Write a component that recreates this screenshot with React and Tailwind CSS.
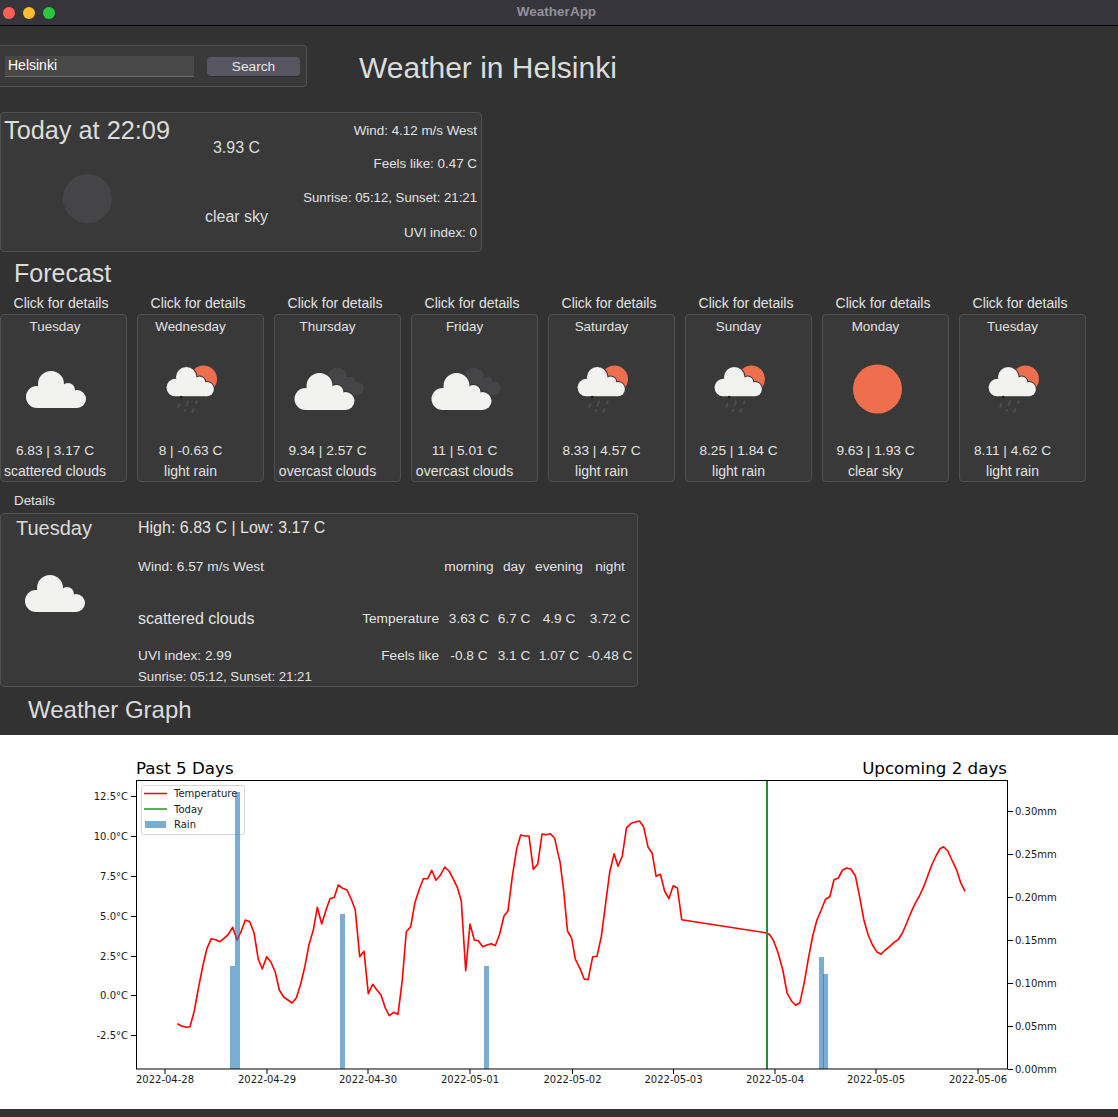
// WeatherApp window: current weather, forecast cards, details and graph
const forecast = [
  { day: 'Tuesday', temp: '6.83 | 3.17 C', desc: 'scattered clouds', icon: 'clouds' },
  { day: 'Wednesday', temp: '8 | -0.63 C', desc: 'light rain', icon: 'rain' },
  { day: 'Thursday', temp: '9.34 | 2.57 C', desc: 'overcast clouds', icon: 'overcast' },
  { day: 'Friday', temp: '11 | 5.01 C', desc: 'overcast clouds', icon: 'overcast' },
  { day: 'Saturday', temp: '8.33 | 4.57 C', desc: 'light rain', icon: 'rain' },
  { day: 'Sunday', temp: '8.25 | 1.84 C', desc: 'light rain', icon: 'rain' },
  { day: 'Monday', temp: '9.63 | 1.93 C', desc: 'clear sky', icon: 'sun' },
  { day: 'Tuesday', temp: '8.11 | 4.62 C', desc: 'light rain', icon: 'rain' },
]

// traced from the plot, first part and second part
const pastLine = [
  [232, 821], [245, 828], [258, 832], [270, 830], [283, 783], [296, 710], [309, 645], [321, 595], [334, 566], [347, 569],
  [360, 575], [372, 565], [385, 553], [398, 532], [411, 570], [423, 545], [436, 510], [449, 515], [462, 548], [475, 628],
  [487, 657], [500, 620], [513, 637], [526, 667], [538, 720], [551, 741], [564, 750], [576, 759], [589, 744], [602, 702],
  [615, 647], [627, 584], [640, 540], [652, 472], [665, 522], [678, 480], [690, 446], [703, 442], [715, 405], [728, 415],
  [741, 420], [754, 448], [766, 480], [779, 620], [792, 604], [805, 731], [818, 703], [830, 719], [843, 735], [856, 774],
  [868, 797], [881, 787], [894, 793], [907, 690], [919, 545], [932, 530], [945, 457], [958, 418], [970, 386], [983, 386],
  [995, 361], [1008, 391], [1021, 376], [1034, 351], [1047, 363], [1059, 385], [1072, 412], [1084, 453], [1097, 662], [1110, 522],
  [1123, 570], [1135, 572], [1148, 590], [1161, 585], [1174, 581], [1186, 587], [1199, 552], [1212, 498], [1224, 482], [1237, 380],
  [1250, 296], [1262, 255], [1275, 258], [1287, 258], [1300, 358], [1313, 343], [1326, 252], [1338, 254], [1351, 251], [1364, 265],
  [1376, 320],
].map(([x, y]) => [100 + x / 3, 750 + y / 3])

const laterLine = [
  [0, 335], [10, 420], [21, 543], [33, 565], [43, 627], [56, 655], [68, 687], [79, 689], [92, 620], [104, 619],
  [116, 560], [127, 470], [140, 365], [152, 311], [163, 349], [175, 318], [187, 233], [200, 220], [212, 216], [223, 213],
  [235, 230], [247, 290], [259, 310], [270, 379], [282, 373], [294, 423], [306, 446], [318, 407], [330, 414], [342, 509],
  [581, 549], [590, 555], [600, 572], [612, 606], [626, 660], [638, 728], [650, 752], [662, 766], [674, 758], [686, 700],
  [698, 625], [710, 558], [722, 510], [734, 480], [746, 448], [758, 440], [770, 389], [782, 384], [794, 360], [806, 354],
  [818, 358], [830, 378], [842, 440], [854, 510], [866, 555], [878, 585], [890, 605], [902, 613], [914, 600], [926, 590],
  [938, 578], [950, 569], [962, 550], [974, 520], [986, 488], [998, 460], [1010, 438], [1022, 410], [1034, 375], [1046, 342],
  [1058, 315], [1068, 296], [1078, 290], [1090, 303], [1102, 332], [1114, 358], [1126, 398], [1138, 424],
].map(([x, y]) => [560 + x / 2.81, 750 + y / 3])

const tempPoints = [...pastLine, ...laterLine].map(([x, y]) => `${x.toFixed(1)},${y.toFixed(1)}`).join(' ')

const leftTicks = [['12.5°C', 796], ['10.0°C', 836], ['7.5°C', 876], ['5.0°C', 916], ['2.5°C', 956], ['0.0°C', 995], ['-2.5°C', 1035]]
const rightTicks = [['0.30mm', 811], ['0.25mm', 854], ['0.20mm', 897], ['0.15mm', 940], ['0.10mm', 983], ['0.05mm', 1026], ['0.00mm', 1069]]
const dateTicks = [['2022-04-28', 165], ['2022-04-29', 267], ['2022-04-30', 368], ['2022-05-01', 470], ['2022-05-02', 572.5], ['2022-05-03', 673.5], ['2022-05-04', 775], ['2022-05-05', 876], ['2022-05-06', 978]]
const rainBars = [[230, 966, 5], [235, 792, 5], [340, 914, 5], [484, 966, 5], [819, 957, 5], [823, 974, 5]]

function CloudShape({ x, y, scale = 1, fill = '#f2f2f0', outline }) {
  const parts = (
    <>
      <circle cx="25" cy="13" r="13" />
      <circle cx="42" cy="19" r="7" />
      <circle cx="51" cy="28" r="9" />
      <circle cx="11" cy="26" r="11" />
      <rect x="11" y="20" width="40" height="17" />
    </>
  )
  return (
    <g transform={`translate(${x} ${y}) scale(${scale})`}>
      {outline && <g fill={outline} stroke={outline} strokeWidth="2.5">{parts}</g>}
      <g fill={fill}>{parts}</g>
    </g>
  )
}

function WeatherIcon({ type }) {
  return (
    <svg width="80" height="80" viewBox="0 0 80 80" className="block -mt-[3px]">
      {type === 'clouds' && <CloudShape x={11} y={22} />}
      {type === 'sun' && <circle cx="41.5" cy="40" r="24.5" fill="#ef6e4d" />}
      {type === 'overcast' && (
        <>
          <CloudShape x={30.5} y={18.5} scale={0.75} fill="#454547" />
          <CloudShape x={6.5} y={24} outline="#393939" />
        </>
      )}
      {type === 'rain' && (
        <>
          <circle cx="52.5" cy="30" r="13.5" fill="#ef6e4d" />
          <CloudShape x={15.5} y={18} scale={0.79} outline="#393939" />
          <circle cx="30.2" cy="48.2" r="1.4" fill="#222222" />
          <g stroke="#4b4b4d" strokeWidth="2.2" strokeLinecap="round">
            <line x1="28.4" y1="55" x2="27.4" y2="58" />
            <line x1="36.9" y1="52.5" x2="35.6" y2="56.5" />
            <line x1="45.6" y1="52.4" x2="44.9" y2="54" />
            <line x1="34.2" y1="61" x2="33.6" y2="62" />
            <line x1="42.4" y1="60.2" x2="41.4" y2="63" />
          </g>
        </>
      )}
    </svg>
  )
}

function WeatherGraph() {
  return (
    <svg width="1118" height="374" viewBox="0 735 1118 374" className="block font-['DejaVu_Sans',sans-serif]">
      <rect x="0" y="735" width="1118" height="374" fill="#ffffff" />
      <text x="136" y="774" className="text-[16.7px]" fill="#000000">Past 5 Days</text>
      <text x="1007" y="774" textAnchor="end" className="text-[16.7px]" fill="#000000">Upcoming 2 days</text>

      <polyline points={tempPoints} fill="none" stroke="#ff0000" strokeWidth="1.6" strokeLinejoin="round" />
      <line x1="767" y1="780" x2="767" y2="1069" stroke="#2c8c2c" strokeWidth="2" />

      {/* Legend sits under the rain bars */}
      <rect x="141.5" y="785.5" width="103" height="49" rx="2" fill="#ffffff" stroke="#d5d5d5" />
      <line x1="144" y1="793.5" x2="167" y2="793.5" stroke="#ff0000" strokeWidth="1.5" />
      <line x1="144" y1="809" x2="167" y2="809" stroke="#2c8c2c" strokeWidth="1.5" />
      <rect x="145" y="821" width="21" height="7" fill="#1f77b4" fillOpacity="0.6" />
      <text x="174" y="797" className="text-[10px]" fill="#1a1a1a">Temperature</text>
      <text x="174" y="812.5" className="text-[10px]" fill="#1a1a1a">Today</text>
      <text x="174" y="828" className="text-[10px]" fill="#1a1a1a">Rain</text>

      {rainBars.map(([x, y, w]) => (
        <rect key={x} x={x} y={y} width={w} height={1069 - y} fill="#1f77b4" fillOpacity="0.6" />
      ))}

      <rect x="136.5" y="780.5" width="871" height="288.5" fill="none" stroke="#000000" />

      {leftTicks.map(([label, y]) => (
        <g key={label}>
          <line x1="131" y1={y + 0.5} x2="136" y2={y + 0.5} stroke="#000000" />
          <text x="128" y={y + 4} textAnchor="end" className="text-[10px]" fill="#1a1a1a">{label}</text>
        </g>
      ))}
      {rightTicks.map(([label, y]) => (
        <g key={label}>
          <line x1="1008" y1={y + 0.5} x2="1013" y2={y + 0.5} stroke="#000000" />
          <text x="1015" y={y + 4} className="text-[10px]" fill="#1a1a1a">{label}</text>
        </g>
      ))}
      {dateTicks.map(([label, x]) => (
        <g key={label}>
          <line x1={x} y1="1069" x2={x} y2="1074" stroke="#000000" />
          <text x={x} y="1083" textAnchor="middle" className="text-[10px]" fill="#1a1a1a">{label}</text>
        </g>
      ))}
    </svg>
  )
}

export default function App() {
  return (
    <div className="w-[1118px] h-[1117px] overflow-hidden bg-[#323232] text-[#e2e2e2] text-[13.4px] font-['Liberation_Sans',Arial,sans-serif]">
      {/* Title bar */}
      <div className="grid grid-cols-[1fr_auto_1fr] items-center h-[26px] bg-[#37353c] border-b border-black">
        <div className="flex items-center gap-2 pl-[3px]">
          <span className="w-3 h-3 rounded-full bg-[#ff5f57]" />
          <span className="w-3 h-3 rounded-full bg-[#febc2e]" />
          <span className="w-3 h-3 rounded-full bg-[#28c840]" />
        </div>
        <span className="mr-[5px] font-bold text-[13.5px] text-[#93919a]">WeatherApp</span>
        <div />
      </div>

      {/* Search */}
      <div className="flex items-center mt-[19px] h-[42px]">
        <div className="flex items-center w-[307px] h-full bg-[#393939] border border-l-0 border-[#505050] rounded-r-sm">
          <div className="flex items-center ml-[5px] pl-[3px] w-[189px] h-[21px] bg-[#484848] border-b border-[#6a6a6a] text-[14px] text-white">Helsinki</div>
          <button className="flex items-center justify-center mt-[2px] pt-px ml-[13px] w-[93px] h-[20px] bg-[#57555f] rounded border-b border-[#2b2b2b] text-[13.7px] text-[#e6e6e6]">Search</button>
        </div>
        <h1 className="ml-[52px] mt-[2px] text-[30px] text-[#dcdcdc]">Weather in Helsinki</h1>
      </div>

      {/* Today */}
      <div className="flex mt-[25px] w-[482px] h-[140px] bg-[#393939] border border-[#505050] rounded-sm">
        <div className="flex flex-col w-[190px]">
          <div className="flex items-center h-[36px] pl-[3px] text-[25.3px] text-[#dcdcdc]">Today at 22:09</div>
          <div className="ml-[62px] mt-[25px] w-[49px] h-[49px] rounded-full bg-[#454547]" />
        </div>
        <div className="grid grid-rows-[70px_68px] w-[91px] text-center text-[16px] text-[#dcdcdc]">
          <div className="self-center">3.93 C</div>
          <div className="self-center">clear sky</div>
        </div>
        <div className="flex-1 grid grid-rows-[34px_33px_34px_36px] items-center justify-items-end pt-px pr-[4px]">
          <div>Wind: 4.12 m/s West</div>
          <div>Feels like: 0.47 C</div>
          <div className="text-[13.2px]">Sunrise: 05:12, Sunset: 21:21</div>
          <div>UVI index: 0</div>
        </div>
      </div>

      {/* Forecast */}
      <h2 className="flex items-center h-[44px] pl-[14px] text-[25px] text-[#dcdcdc]">Forecast</h2>
      <div className="flex gap-[10px]">
        {forecast.map((item, i) => (
          <div key={i} className="w-[127px]">
            <div className="flex items-center justify-center w-[122px] h-[14px] text-[14px]">Click for details</div>
            <div className={`grid grid-rows-[24px_102px_20px_20px] justify-items-center items-center mt-[4px] w-[127px] h-[168px] bg-[#393939] border border-[#505050] rounded-sm ${i === 0 ? 'pr-[17px]' : 'pr-[20px]'}`}>
              <div>{item.day}</div>
              <WeatherIcon type={item.icon} />
              <div className="text-[13.7px]">{item.temp}</div>
              <div className="whitespace-nowrap text-[14px]">{item.desc}</div>
            </div>
          </div>
        ))}
      </div>

      {/* Details */}
      <div className="flex items-center mt-[10px] h-[18px] pl-[14px]">Details</div>
      <div className="grid grid-cols-[137px_212px_94px_50px_40px_50px_52px] grid-rows-[27px_52px_52px_22px_19px] items-center mt-[3px] w-[638px] h-[174px] bg-[#393939] border border-[#505050] rounded-sm text-[13.7px]">
        <div className="w-[106px] text-center text-[20px] text-[#dcdcdc]">Tuesday</div>
        <div className="col-span-6 text-[16px]">High: 6.83 C | Low: 3.17 C</div>

        <div className="row-span-2 flex justify-center w-[106px] pt-[2px]"><WeatherIcon type="clouds" /></div>
        <div>Wind: 6.57 m/s West</div>
        <div />
        <div className="text-center">morning</div>
        <div className="text-center">day</div>
        <div className="text-center">evening</div>
        <div className="text-center">night</div>

        <div className="text-[16px]">scattered clouds</div>
        <div className="text-right pr-[5px]">Temperature</div>
        <div className="text-center">3.63 C</div>
        <div className="text-center">6.7 C</div>
        <div className="text-center">4.9 C</div>
        <div className="text-center">3.72 C</div>

        <div />
        <div>UVI index: 2.99</div>
        <div className="text-right pr-[5px]">Feels like</div>
        <div className="text-center">-0.8 C</div>
        <div className="text-center">3.1 C</div>
        <div className="text-center">1.07 C</div>
        <div className="text-center">-0.48 C</div>

        <div />
        <div className="col-span-6 text-[13.2px]">Sunrise: 05:12, Sunset: 21:21</div>
      </div>

      <h2 className="flex items-center h-[46px] pl-[28px] text-[24px] text-[#dcdcdc]">Weather Graph</h2>
      <div className="mt-[2px]">
        <WeatherGraph />
      </div>
    </div>
  )
}
